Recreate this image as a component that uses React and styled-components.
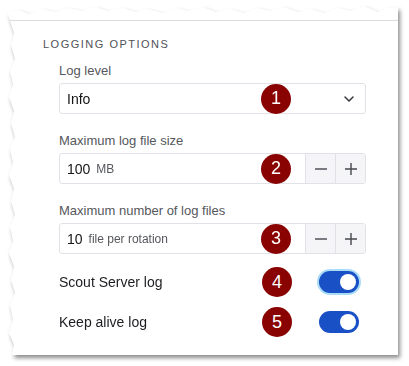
import styled, { createGlobalStyle } from "styled-components";

const GlobalStyle = createGlobalStyle`
  html, body {
    margin: 0;
    background: #fff;
    font-family: "Liberation Sans", Arial, sans-serif;
  }
`;

// torn paper outline: jagged top and left edges
const tornEdge = [
  [0, 8], [10, 5], [22, 9], [34, 4], [48, 7], [60, 3], [75, 6], [88, 2], [100, 6],
  [115, 3], [128, 7], [140, 4], [155, 8], [168, 3], [180, 6], [195, 2], [208, 7],
  [222, 4], [236, 8], [250, 3], [262, 6], [276, 2], [290, 7], [303, 4], [316, 8],
  [330, 3], [343, 6], [356, 1], [370, 7], [380, 3], [390, 2],
  [390, 350], [4, 350],
  [6, 340], [1, 328], [5, 315], [2, 300], [7, 288], [3, 275], [6, 262], [1, 248],
  [5, 236], [2, 222], [7, 210], [3, 196], [6, 184], [1, 170], [5, 158], [2, 144],
  [7, 132], [3, 118], [6, 106], [1, 92], [5, 80], [2, 66], [7, 54], [3, 40],
  [6, 28], [2, 16],
]
  .map(([x, y]) => `${x}px ${y}px`)
  .join(", ");

const Page = styled.div`
  width: 409px;
  height: 366px;
  padding: 5px 0 0 8px;
  box-sizing: border-box;
  overflow: hidden;
`;

const Shadow = styled.div`
  width: 390px;
  filter: drop-shadow(2px 3px 2px rgba(0, 0, 0, 0.45));
`;

const Paper = styled.div`
  width: 390px;
  height: 350px;
  box-sizing: border-box;
  padding-top: 15px;
  background: #fff;
  clip-path: polygon(${tornEdge});
`;

const Section = styled.section`
  border-top: 1px solid #dcdcdf;
  padding: 16px 32px 0 35px;
`;

const Heading = styled.h3`
  margin: 0;
  font-size: 11px;
  line-height: 14px;
  font-weight: normal;
  letter-spacing: 1.5px;
  text-transform: uppercase;
  color: #4f5157;
`;

const Fields = styled.div`
  margin: 12px 0 0 16px;
  width: 307px;
  display: flex;
  flex-direction: column;
  gap: 19px;
`;

const Field = styled.div`
  display: flex;
  flex-direction: column;
`;

const Label = styled.label`
  font-size: 13px;
  line-height: 16px;
  color: #55575c;
  margin-bottom: 4px;
`;

const Box = styled.div`
  position: relative;
  height: 31px;
  box-sizing: border-box;
  border: 1px solid #e1e2e7;
  border-radius: 3px;
  display: flex;
  align-items: center;
  padding-left: 7px;
  padding-right: ${(p) => (p.$select ? "11px" : "0")};
  justify-content: ${(p) => (p.$select ? "space-between" : "flex-start")};
`;

const Value = styled.span`
  font-size: 14px;
  color: #141414;
`;

const Unit = styled.span`
  font-size: 12px;
  color: #55575c;
  margin-left: 6px;
`;

const Stepper = styled.div`
  margin-left: auto;
  align-self: stretch;
  display: flex;
`;

const StepButton = styled.button`
  width: 30px;
  padding: 0;
  border: none;
  border-left: 1px solid #e1e2e7;
  background: #f5f5f7;
  display: flex;
  align-items: center;
  justify-content: center;
  color: #45474c;
  &:last-child {
    border-radius: 0 2px 2px 0;
  }
`;

const Toggles = styled.div`
  margin: 14px 0 0 16px;
  width: 307px;
  display: flex;
  flex-direction: column;
  gap: 12px;
`;

const ToggleRow = styled.div`
  position: relative;
  height: 28px;
  display: flex;
  align-items: center;
  justify-content: space-between;
  padding-right: 7px;
  font-size: 14px;
  color: #1c1d20;
`;

const Track = styled.span`
  width: 40px;
  height: 22px;
  border-radius: 11px;
  background: #1a50c6;
  display: flex;
  align-items: center;
  justify-content: flex-end;
  padding-right: 3px;
  box-sizing: border-box;
  box-shadow: ${(p) => (p.$focused ? "0 0 0 2px #a9dcf7" : "none")};
`;

const Knob = styled.span`
  width: 16px;
  height: 16px;
  border-radius: 50%;
  background: #fff;
`;

const Badge = styled.span`
  position: absolute;
  right: 74px;
  top: 50%;
  margin-top: -15px;
  width: 30px;
  height: 30px;
  border-radius: 50%;
  background: #8a0303;
  color: #fff;
  font-size: 18px;
  display: flex;
  align-items: center;
  justify-content: center;
`;

const Chevron = () => (
  <svg width="10" height="6" viewBox="0 0 10 6" fill="none">
    <path d="M1 1l4 4 4-4" stroke="#33353a" strokeWidth="1.5" strokeLinecap="round" strokeLinejoin="round" />
  </svg>
);

const Minus = () => (
  <svg width="14" height="14" viewBox="0 0 14 14">
    <path d="M1 7h12" stroke="currentColor" strokeWidth="1.4" />
  </svg>
);

const Plus = () => (
  <svg width="14" height="14" viewBox="0 0 14 14">
    <path d="M1 7h12M7 1v12" stroke="currentColor" strokeWidth="1.4" />
  </svg>
);

const NumberField = ({ label, value, unit, badge }) => (
  <Field>
    <Label>{label}</Label>
    <Box>
      <Value>{value}</Value>
      <Unit>{unit}</Unit>
      <Badge>{badge}</Badge>
      <Stepper>
        <StepButton><Minus /></StepButton>
        <StepButton><Plus /></StepButton>
      </Stepper>
    </Box>
  </Field>
);

const Toggle = ({ label, badge, focused }) => (
  <ToggleRow>
    <span>{label}</span>
    <Badge>{badge}</Badge>
    <Track $focused={focused}>
      <Knob />
    </Track>
  </ToggleRow>
);

const App = () => (
  <Page>
    <GlobalStyle />
    <Shadow>
      <Paper>
        <Section>
          <Heading>Logging options</Heading>
          <Fields>
            <Field>
              <Label>Log level</Label>
              <Box $select>
                <Value>Info</Value>
                <Badge>1</Badge>
                <Chevron />
              </Box>
            </Field>
            <NumberField label="Maximum log file size" value="100" unit="MB" badge="2" />
            <NumberField label="Maximum number of log files" value="10" unit="file per rotation" badge="3" />
          </Fields>
          <Toggles>
            <Toggle label="Scout Server log" badge="4" focused />
            <Toggle label="Keep alive log" badge="5" />
          </Toggles>
        </Section>
      </Paper>
    </Shadow>
  </Page>
);

export default App;
